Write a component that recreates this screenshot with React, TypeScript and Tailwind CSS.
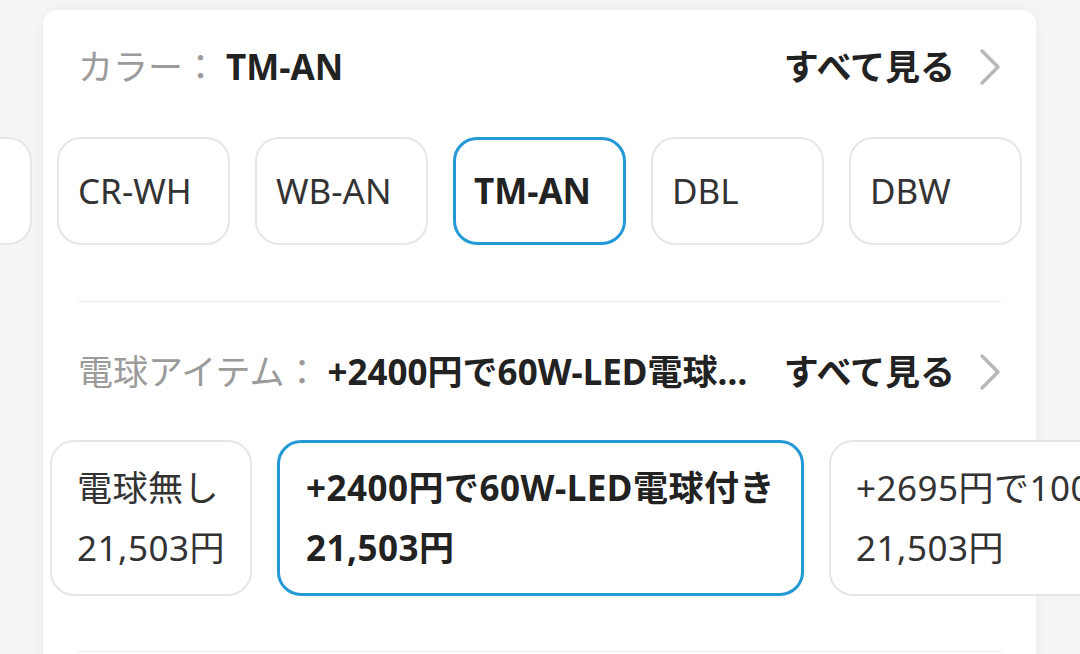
import React from 'react'

const colors = ['BK-WH', 'CR-WH', 'WB-AN', 'TM-AN', 'DBL', 'DBW']
const bulbs = [
  { label: '電球無し', price: '21,503円' },
  { label: '+2400円で60W-LED電球付き', price: '21,503円' },
  { label: '+2695円で100W-LED電球付き', price: '21,503円' },
]

const Chevron = () => (
  <svg width="22" height="38" viewBox="0 0 22 38" className="ml-[24px] shrink-0">
    <polyline points="3,3 19,19 3,35" fill="none" stroke="#b8b8b8" strokeWidth="3.5" strokeLinecap="round" strokeLinejoin="round" />
  </svg>
)

const SeeAll = () => (
  <div className="ml-[30px] flex shrink-0 items-center">
    <span className="font-bold text-[#222]">すべて見る</span>
    <Chevron />
  </div>
)

const App = () => {
  const selectedColor = 'TM-AN'
  const selectedBulb = 1

  return (
    <div className="h-[654px] w-[1080px] overflow-hidden bg-[#f5f5f5] pl-[43px] pt-[10px] font-['Noto_Sans','Noto_Sans_CJK_JP',sans-serif]">
      <div className="w-[993px] rounded-[14px] bg-white px-[35px] pt-[33px] pb-[40px] shadow-[0_0_14px_rgba(0,0,0,0.04)]">
        {/* カラー */}
        <div className="flex h-[48px] items-center text-[35px] leading-[48px]">
          <span className="text-[#9b9b9b]">カラー：</span>
          <span className="ml-2 font-bold text-[#222]">{selectedColor}</span>
          <div className="flex-1" />
          <SeeAll />
        </div>
        <div className="ml-[-219px] mt-[46px] flex gap-[25px]">
          {colors.map((c) => (
            <div
              key={c}
              className={
                c === selectedColor
                  ? 'flex h-[108px] w-[173px] shrink-0 items-center rounded-[24px] border-[3px] border-[#2599d6] pl-[18px] text-[35px] font-bold text-[#222]'
                  : 'flex h-[108px] w-[173px] shrink-0 items-center rounded-[24px] border-2 border-[#e6e6e6] bg-white pl-[19px] text-[35px] text-[#333]'
              }
            >
              {c}
            </div>
          ))}
        </div>
        <div className="mt-[56px] h-px bg-[#ececec]" />

        {/* 電球アイテム */}
        <div className="mt-[46px] flex h-[48px] items-center text-[35px] leading-[48px]">
          <span className="shrink-0 text-[#9b9b9b]">電球アイテム：</span>
          <span className="ml-2 min-w-0 flex-1 truncate font-bold text-[#222]">
            {bulbs[selectedBulb].label}
          </span>
          <SeeAll />
        </div>
        <div className="ml-[-28px] mt-[44px] flex gap-[25px]">
          {bulbs.map((b, i) => (
            <div
              key={b.label}
              className={
                i === selectedBulb
                  ? 'shrink-0 rounded-[24px] border-[3px] border-[#2599d6] px-[26px] py-[15px] text-[35px] leading-[60px] tracking-[0.5px] font-bold text-[#222]'
                  : 'shrink-0 rounded-[24px] border-2 border-[#e6e6e6] bg-white px-[25px] py-[16px] text-[35px] leading-[60px] tracking-[0.5px] text-[#333]'
              }
            >
              <div className="whitespace-nowrap">{b.label}</div>
              <div className="whitespace-nowrap">{b.price}</div>
            </div>
          ))}
        </div>
        <div className="mt-[55px] h-px bg-[#ececec]" />
      </div>
    </div>
  )
}

export default App
